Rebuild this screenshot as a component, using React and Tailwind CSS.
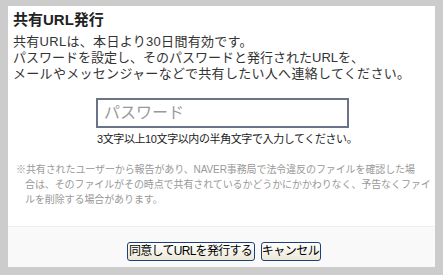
export default function App() {
  const font = { fontFamily: '"Liberation Sans", "Noto Sans CJK JP", sans-serif' };
  return (
    <div
      className="w-[443px] h-[275px] bg-[#cccccc] pt-[6px] px-[8px] pb-[8px] text-[#333]"
      style={font}
    >
      <div className="bg-white h-full flex flex-col">
        <div className="px-[5px] pt-[4px]">
          <h1 className="text-[15px] font-bold leading-[20px] text-[#222]">共有URL発行</h1>
          <div className="mt-[4px] text-[13px] leading-[16px] tracking-[0.3px] whitespace-nowrap">
            <p>共有URLは、本日より30日間有効です。</p>
            <p className="tracking-[0px]">パスワードを設定し、そのパスワードと発行されたURLを、</p>
            <p>メールやメッセンジャーなどで共有したい人へ連絡してください。</p>
          </div>
        </div>

        <div className="ml-[88px] mt-[16px] w-[253px]">
          <input
            type="text"
            placeholder="パスワード"
            className="w-full h-[30px] border-2 border-[#6b7388] px-[6px] text-[16px] outline-none placeholder:text-[#999]"
            style={font}
          />
          <p className="mt-[4px] text-[11px] leading-[14px] text-[#222] pl-[1px] whitespace-nowrap tracking-[-0.4px]">
            3文字以上10文字以内の半角文字で入力してください。
          </p>
        </div>

        <p className="mt-[16px] mx-[8px] pl-[9px] -indent-[9px] text-[10px] leading-[15px] text-[#999] tracking-[-0.1px] whitespace-nowrap">
          ※共有されたユーザーから報告があり、NAVER事務局で法令違反のファイルを確認した場
          <br />
          合は、そのファイルがその時点で共有されているかどうかにかかわりなく、予告なくファイ
          <br />
          ルを削除する場合があります。
        </p>

        <div className="mt-auto h-[41px] border-t border-[#eeeeee] bg-[#f9f9f9] flex justify-center items-start gap-[6px] pt-[15px] pl-[4px]">
          <button
            className="w-[128px] h-[19px] px-0 text-[12px] leading-[15px] tracking-[-0.7px] text-black border border-[#1c3f7a] rounded-[3px] bg-gradient-to-b from-white to-[#ece9d8] whitespace-nowrap"
            style={font}
          >
            同意してURLを発行する
          </button>
          <button
            className="w-[60px] h-[19px] px-0 text-[12px] leading-[15px] tracking-[-0.5px] text-black border border-[#1c3f7a] rounded-[3px] bg-gradient-to-b from-white to-[#ece9d8] whitespace-nowrap"
            style={font}
          >
            キャンセル
          </button>
        </div>
      </div>
    </div>
  );
}
